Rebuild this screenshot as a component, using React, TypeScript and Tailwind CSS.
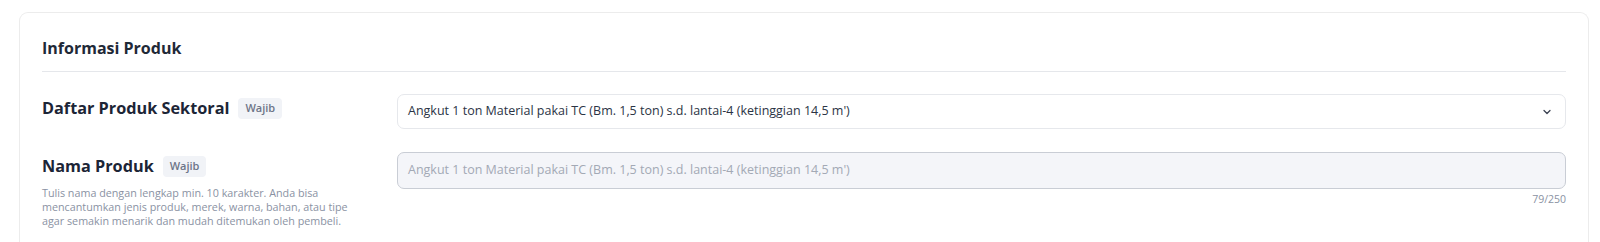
import React from "react";

const font = { fontFamily: '"Open Sans", "Noto Sans", sans-serif' };

function Badge() {
  return (
    <span className="inline-flex h-[21px] items-center rounded-[4px] bg-[#f1f3f7] px-[7px] text-[11px] font-semibold text-[#6d7588]">
      Wajib
    </span>
  );
}

export default function App() {
  return (
    <div className="h-[242px] overflow-hidden bg-white pt-[12px] pl-[19px] pr-[11px]" style={font}>
      <div className="rounded-t-[9px] border border-b-0 border-[#ececec] px-[22px] pt-[23px] pb-[20px]">
        <h2 className="text-[16px] font-bold leading-[24px] text-[#1f2937] border-b border-[#e5e7eb] pb-[11px]">
          Informasi Produk
        </h2>
        <div className="mt-[22px] flex">
          <div className="w-[355px] shrink-0 pt-[4px]">
            <div className="flex h-[21px] items-center gap-[9px]">
              <span className="text-[16.25px] font-bold leading-[21px] text-[#1c2536]">Daftar Produk Sektoral</span>
              <Badge />
            </div>
          </div>
          <div className="flex h-[35px] flex-1 items-center justify-between rounded-[7px] border border-[#e6e8ec] bg-white pl-[10px] pr-[13px]">
            <span className="text-[12.5px] text-[#2b3445]">
              Angkut 1 ton Material pakai TC (Bm. 1,5 ton) s.d. lantai-4 (ketinggian 14,5 m')
            </span>
            <svg width="10" height="10" viewBox="0 0 10 10" fill="none">
              <path d="M2 3.5 L5 6.5 L8 3.5" stroke="#3b4252" strokeWidth="1.3" strokeLinecap="round" strokeLinejoin="round" />
            </svg>
          </div>
        </div>
        <div className="mt-[23px] flex">
          <div className="w-[355px] shrink-0 pt-[4px]">
            <div className="flex h-[21px] items-center gap-[9px]">
              <span className="text-[16.25px] font-bold leading-[21px] text-[#1c2536]">Nama Produk</span>
              <Badge />
            </div>
            <p className="mt-[9px] w-[316px] text-[10.75px] leading-[14px] text-[#8a92a3]">
              Tulis nama dengan lengkap min. 10 karakter. Anda bisa mencantumkan jenis produk, merek, warna, bahan, atau tipe agar semakin menarik dan mudah ditemukan oleh pembeli.
            </p>
          </div>
          <div className="flex-1">
            <div className="flex h-[37px] items-center rounded-[7px] border border-[#c9cdd5] bg-[#f4f5f9] pl-[10px]">
              <span className="text-[12.5px] text-[#a3a9b5]">
                Angkut 1 ton Material pakai TC (Bm. 1,5 ton) s.d. lantai-4 (ketinggian 14,5 m')
              </span>
            </div>
            <div className="mt-[3px] text-right text-[10.5px] leading-[14px] text-[#8a92a3]">79/250</div>
          </div>
        </div>
      </div>
    </div>
  );
}
